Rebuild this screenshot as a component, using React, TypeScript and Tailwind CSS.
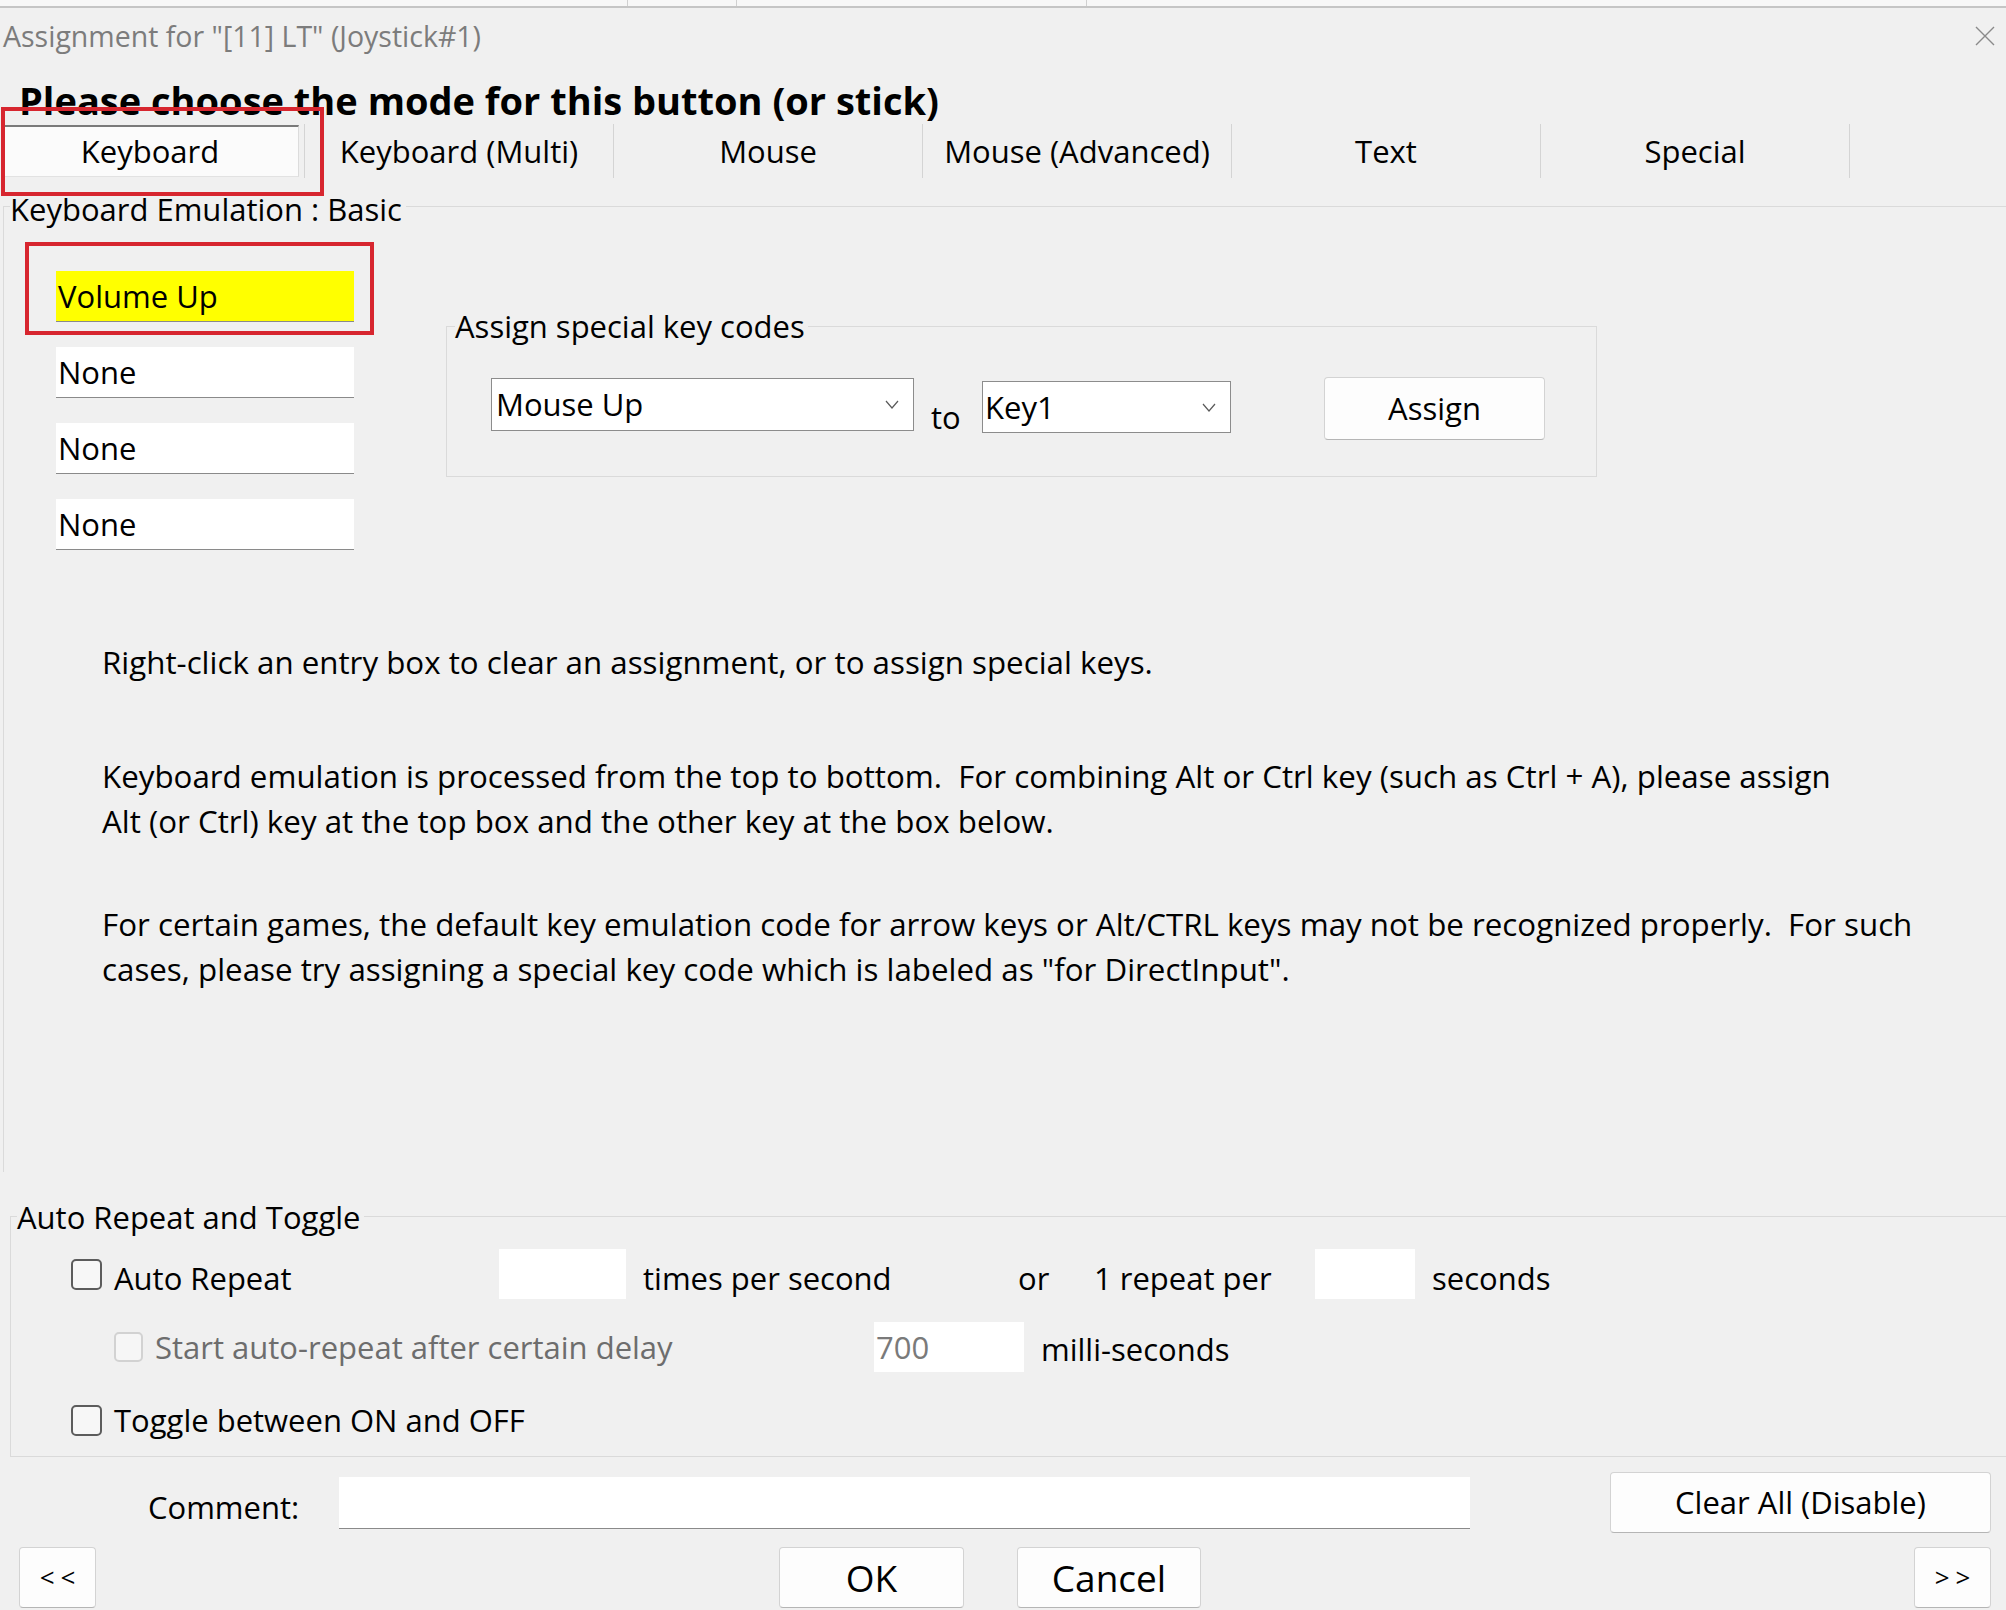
import React from 'react';

const tabs = ['Keyboard', 'Keyboard (Multi)', 'Mouse', 'Mouse (Advanced)', 'Text', 'Special'];

const Chevron: React.FC = () => (
  <svg width="14" height="9" viewBox="0 0 14 9" className="shrink-0">
    <path d="M1 1 L7 8 L13 1" fill="none" stroke="#5a5a5a" strokeWidth="1.2" />
  </svg>
);

const Entry: React.FC<{ value: string; highlight?: boolean }> = ({ value, highlight }) => (
  <div
    className={`h-[51px] w-[298px] flex items-center pl-[2px] text-[31px] border-b border-[#8a8a8a] ${
      highlight ? 'bg-[#ffff00]' : 'bg-white'
    }`}
  >
    {value}
  </div>
);

const Checkbox: React.FC<{ disabled?: boolean }> = ({ disabled }) => (
  <div
    className={
      disabled
        ? 'w-[29px] h-[30px] shrink-0 rounded-[5px] border-2 border-[#d2d2d2] bg-[#f6f6f6]'
        : 'w-[31px] h-[31px] shrink-0 rounded-[5px] border-2 border-[#5c5c5c] bg-[#f7f7f7]'
    }
  />
);

const Button: React.FC<{ className: string; children: React.ReactNode }> = ({ className, children }) => (
  <div
    className={`flex items-center justify-center bg-[#fdfdfd] border border-[#d3d3d3] border-b-[#b5b5b5] rounded-[4px] ${className}`}
  >
    {children}
  </div>
);

const App: React.FC = () => {
  return (
    <div className="w-[2006px] h-[1610px] bg-[#f0f0f0] overflow-hidden font-['Open_Sans',sans-serif] text-black">
      {/* window behind the dialog */}
      <div className="h-[8px] bg-[#f7f7f7] border-b-2 border-[#c5c5c5] flex">
        <span className="ml-[627px] w-[1px] h-[6px] bg-[#d0d0d0]" />
        <span className="ml-[108px] w-[1px] h-[6px] bg-[#d0d0d0]" />
        <span className="ml-[349px] w-[1px] h-[6px] bg-[#d0d0d0]" />
      </div>

      {/* title bar */}
      <div className="h-[56px] flex items-center justify-between pl-[3px] pr-[11px]">
        <span className="text-[28.5px] text-[#7c7c7c]">Assignment for "[11] LT" (Joystick#1)</span>
        <svg width="20" height="20" viewBox="0 0 20 20">
          <path d="M1 1 L19 19 M19 1 L1 19" stroke="#8a8a8a" strokeWidth="1.4" fill="none" />
        </svg>
      </div>

      {/* heading */}
      <div className="mt-[12px] h-[48px] leading-[48px] pl-[19px] text-[38px] font-bold">
        Please choose the mode for this button (or stick)
      </div>

      {/* mode tabs */}
      <div className="flex h-[54px] -ml-[4px]">
        {tabs.map((t, i) => (
          <div key={t} className="relative w-[309px] h-[54px] flex items-center justify-center border-r border-[#d4d4d4] text-[31px]">
            {i === 0 && (
              <>
                <div className="absolute left-[7px] right-[5px] top-[1px] bottom-[1px] bg-[#fbfbfb] border-t-2 border-[#7a7a7a] border-r border-r-[#dcdcdc] border-b border-b-[#e2e2e2]" />
                <div className="absolute left-[5px] -right-[20px] -top-[17px] -bottom-[18px] border-4 border-[#d7262f]" />
              </>
            )}
            <span className="relative">{t}</span>
          </div>
        ))}
      </div>

      {/* keyboard emulation panel */}
      <div className="mt-[28px] ml-[3px] h-[966px] border-t border-l border-[#dadada]">
        <div className="-mt-[18px] ml-[6px] w-fit h-[40px] leading-[40px] pr-[4px] bg-[#f0f0f0] text-[31px]">
          Keyboard Emulation : Basic
        </div>

        <div className="mt-[42px] flex items-start">
          <div className="ml-[52px] flex flex-col gap-[25px]">
            <div className="relative">
              <div className="absolute -left-[31px] -right-[20px] -top-[29px] -bottom-[13px] border-4 border-[#d7262f]" />
              <Entry value="Volume Up" highlight />
            </div>
            <Entry value="None" />
            <Entry value="None" />
            <Entry value="None" />
          </div>

          <div className="ml-[92px] mt-[55px] w-[1151px] h-[151px] border border-[#dadada]">
            <div className="-mt-[21px] ml-[8px] w-fit h-[40px] leading-[40px] pr-[3px] bg-[#f0f0f0] text-[31px]">
              Assign special key codes
            </div>
            <div className="mt-[32px] flex items-start text-[31px]">
              <div className="ml-[44px] w-[423px] h-[53px] bg-white border border-[#8c8c8c] flex items-center justify-between pl-[4px] pr-[14px]">
                <span>Mouse Up</span>
                <Chevron />
              </div>
              <div className="w-[68px] pl-[17px] mt-[14px] leading-[50px]">to</div>
              <div className="mt-[3px] w-[249px] h-[52px] bg-white border border-[#8c8c8c] flex items-center justify-between pl-[2px] pr-[14px]">
                <span>Key1</span>
                <Chevron />
              </div>
              <Button className="ml-[93px] -mt-[1px] w-[221px] h-[63px] text-[31px]">Assign</Button>
            </div>
          </div>
        </div>

        <div className="pl-[98px] text-[31.3px] leading-[45px]">
          <p className="mt-[90px]">Right-click an entry box to clear an assignment, or to assign special keys.</p>
          <p className="mt-[69px] whitespace-pre">
            Keyboard emulation is processed from the top to bottom.  For combining Alt or Ctrl key (such as Ctrl + A), please assign
            <br />
            Alt (or Ctrl) key at the top box and the other key at the box below.
          </p>
          <p className="mt-[58px] whitespace-pre">
            For certain games, the default key emulation code for arrow keys or Alt/CTRL keys may not be recognized properly.  For such
            <br />
            cases, please try assigning a special key code which is labeled as "for DirectInput".
          </p>
        </div>
      </div>

      {/* auto repeat and toggle */}
      <div className="mt-[44px] ml-[10px] h-[241px] border-t border-l border-b border-[#dadada] text-[31px]">
        <div className="-mt-[20px] ml-[6px] w-fit h-[40px] leading-[40px] pr-[4px] bg-[#f0f0f0]">
          Auto Repeat and Toggle
        </div>

        <div className="mt-[12px] flex items-center h-[50px]">
          <div className="ml-[60px] w-[428px] flex items-center">
            <Checkbox />
            <span className="ml-[12px] mt-[8px]">Auto Repeat</span>
          </div>
          <div className="w-[127px] h-[50px] bg-white" />
          <span className="w-[392px] pl-[17px] mt-[8px]">times per second</span>
          <span className="w-[76px] mt-[8px]">or</span>
          <span className="w-[221px] mt-[8px]">1 repeat per</span>
          <div className="w-[100px] h-[50px] bg-white" />
          <span className="pl-[17px] mt-[8px]">seconds</span>
        </div>

        <div className="mt-[23px] flex items-center h-[50px]">
          <div className="ml-[103px] w-[760px] flex items-center">
            <Checkbox disabled />
            <span className="ml-[12px] text-[#6d6d6d]">Start auto-repeat after certain delay</span>
          </div>
          <div className="w-[150px] h-[50px] bg-white flex items-center pl-[2px] text-[#7a7a7a]">700</div>
          <span className="pl-[17px] mt-[4px]">milli-seconds</span>
        </div>

        <div className="mt-[28px] flex items-center h-[40px]">
          <div className="ml-[60px] flex items-center">
            <Checkbox />
            <span className="ml-[12px]">Toggle between ON and OFF</span>
          </div>
        </div>
      </div>

      {/* comment */}
      <div className="mt-[15px] flex items-center h-[61px] pl-[148px] text-[31px]">
        <span className="w-[191px] mt-[10px]">Comment:</span>
        <div className="w-[1131px] h-[52px] bg-white border-b border-[#8a8a8a]" />
        <Button className="ml-[140px] w-[381px] h-[61px] text-[31px]">Clear All (Disable)</Button>
      </div>

      {/* bottom buttons */}
      <div className="mt-[14px] flex h-[61px] pl-[19px]">
        <Button className="w-[77px] h-[61px] text-[26px] tracking-[6px] pl-[6px]">&lt;&lt;</Button>
        <Button className="ml-[683px] w-[185px] h-[61px] text-[37px]">OK</Button>
        <Button className="ml-[53px] w-[184px] h-[61px] text-[37px]">Cancel</Button>
        <Button className="ml-[713px] w-[77px] h-[61px] text-[26px] tracking-[6px] pl-[6px]">&gt;&gt;</Button>
      </div>
    </div>
  );
};

export default App;
